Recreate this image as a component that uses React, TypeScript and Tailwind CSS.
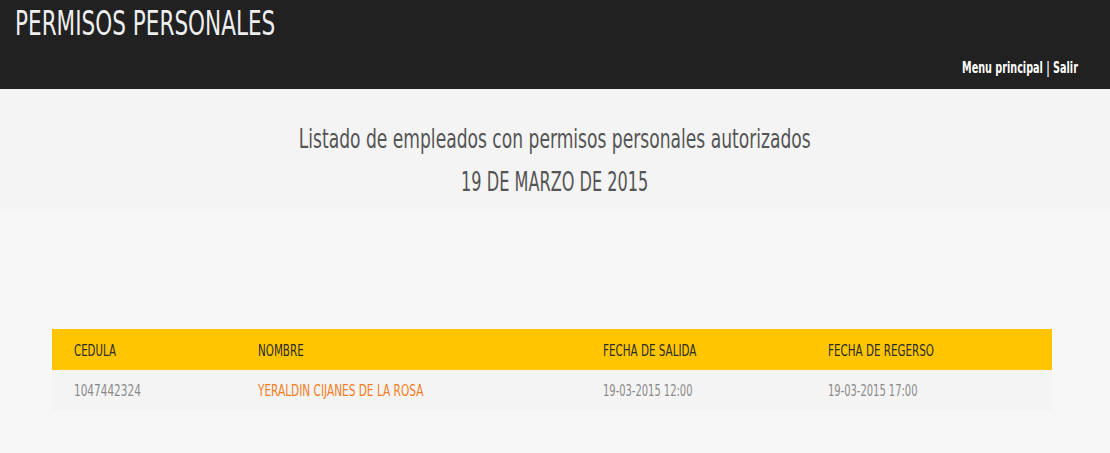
import React from 'react';

const rows = [
  {
    cedula: '1047442324',
    nombre: 'YERALDIN CIJANES DE LA ROSA',
    salida: '19-03-2015 12:00',
    regreso: '19-03-2015 17:00',
  },
];

// condensed look: DejaVu Sans Condensed squeezed a bit more
function Narrow({ children, className = '' }: { children: React.ReactNode; className?: string }) {
  return <span className={`inline-block whitespace-nowrap ${className}`}>{children}</span>;
}

export default function App() {
  return (
    <div className="min-h-[453px] bg-[#f7f7f7] font-['DejaVu_Sans_Condensed','DejaVu_Sans',sans-serif]">
      <header className="h-[89px] bg-[#212121] pl-[15px] pr-[32px] flex flex-col">
        <h1 className="pt-[3px] text-[34px] leading-[40px] text-[#eeeeee]">
          <Narrow className="origin-left scale-x-[0.705]">PERMISOS PERSONALES</Narrow>
        </h1>
        <nav className="mt-auto mb-[11px] self-end text-[16px] leading-[20px] font-bold text-white">
          <Narrow className="origin-right scale-x-[0.67]">
            <a href="#">Menu principal</a> | <a href="#">Salir</a>
          </Narrow>
        </nav>
      </header>

      <section className="h-[120px] bg-[#f4f4f4] flex flex-col items-center pt-[34px] text-[#555555] text-[26px] leading-[32px]">
        <h2>
          <Narrow className="origin-center scale-x-[0.732]">Listado de empleados con permisos personales autorizados</Narrow>
        </h2>
        <h3 className="mt-[11px]">
          <Narrow className="origin-center scale-x-[0.69]">19 DE MARZO DE 2015</Narrow>
        </h3>
      </section>

      <div className="pt-[120px] px-[52px]">
        <table className="w-[1000px] text-left text-[16px] leading-[20px]">
          <thead className="bg-[#ffc600] text-[#2b2b2b]">
            <tr className="h-[41px]">
              <th className="w-[184px] pl-[22px] pt-[2px] font-normal">
                <Narrow className="origin-left scale-x-[0.71]">CEDULA</Narrow>
              </th>
              <th className="w-[345px] pl-[22px] pt-[2px] font-normal">
                <Narrow className="origin-left scale-x-[0.72]">NOMBRE</Narrow>
              </th>
              <th className="w-[225px] pl-[22px] pt-[2px] font-normal">
                <Narrow className="origin-left scale-x-[0.72]">FECHA DE SALIDA</Narrow>
              </th>
              <th className="pl-[22px] pt-[2px] font-normal">
                <Narrow className="origin-left scale-x-[0.72]">FECHA DE REGERSO</Narrow>
              </th>
            </tr>
          </thead>
          <tbody className="bg-[#f4f4f4]">
            {rows.map((r) => (
              <tr key={r.cedula} className="h-[40px]">
                <td className="pl-[22px] pt-[2px] text-[#8a8a8a]">
                  <Narrow className="origin-left scale-x-[0.73]">{r.cedula}</Narrow>
                </td>
                <td className="pl-[22px] pt-[2px] text-[#f47c20]">
                  <Narrow className="origin-left scale-x-[0.733]">{r.nombre}</Narrow>
                </td>
                <td className="pl-[22px] pt-[2px] text-[#8a8a8a]">
                  <Narrow className="origin-left scale-x-[0.69]">{r.salida}</Narrow>
                </td>
                <td className="pl-[22px] pt-[2px] text-[#8a8a8a]">
                  <Narrow className="origin-left scale-x-[0.69]">{r.regreso}</Narrow>
                </td>
              </tr>
            ))}
          </tbody>
        </table>
      </div>
    </div>
  );
}
